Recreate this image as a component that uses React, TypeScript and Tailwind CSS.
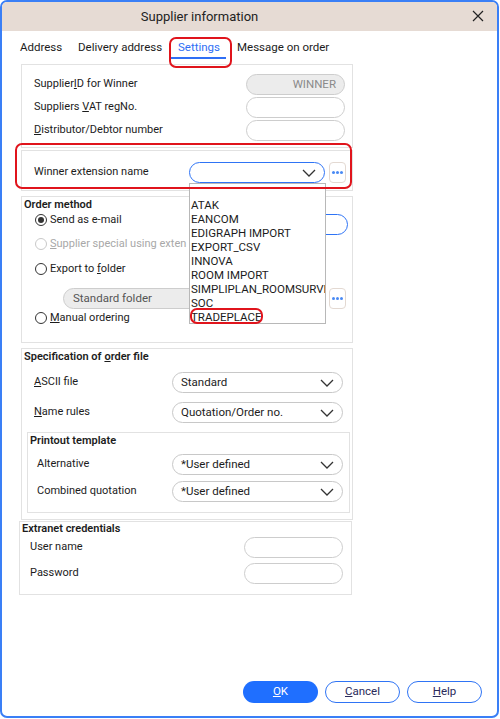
import React from 'react';

const font = { fontFamily: 'Roboto, "Noto Sans", sans-serif' };

function Chevron() {
  return (
    <svg width="14" height="8" viewBox="0 0 14 8" className="shrink-0">
      <path d="M1 1 L7 7 L13 1" fill="none" stroke="#333" strokeWidth="1.3" />
    </svg>
  );
}

function Dots() {
  return (
    <div className="w-[17px] h-[21px] shrink-0 rounded-[4px] border border-[#e3d9d2] flex items-center justify-center gap-[1px]">
      <span className="w-[3px] h-[3px] rounded-full bg-[#4a8af4]" />
      <span className="w-[3px] h-[3px] rounded-full bg-[#4a8af4]" />
      <span className="w-[3px] h-[3px] rounded-full bg-[#4a8af4]" />
    </div>
  );
}

function Select({ value, width, active }: { value?: string; width: string; active?: boolean }) {
  return (
    <div
      className={`${width} h-[21px] rounded-full border flex items-center justify-between pl-[8px] pr-[8px] ${
        active ? 'border-[#2f74f5]' : 'border-[#c8c8c8]'
      }`}
    >
      <span className="text-[11.5px] text-[#1c1c1c]">{value}</span>
      <Chevron />
    </div>
  );
}

function Input({ value, gray }: { value?: string; gray?: boolean }) {
  return (
    <div
      className={`w-[99px] h-[21px] rounded-full border border-[#cdcdcd] flex items-center justify-end pr-[8px] text-[11.5px] text-[#8a8a8a] ${
        gray ? 'bg-[#ececec]' : 'bg-white'
      }`}
    >
      {value}
    </div>
  );
}

function Radio({ checked, disabled }: { checked?: boolean; disabled?: boolean }) {
  return (
    <span
      className={`w-[12px] h-[12px] rounded-full border flex items-center justify-center shrink-0 ${
        disabled ? 'border-[#c8c8c8]' : 'border-[#333]'
      }`}
    >
      {checked && <span className="w-[6px] h-[6px] rounded-full bg-[#333]" />}
    </span>
  );
}

const items = ['', 'ATAK', 'EANCOM', 'EDIGRAPH IMPORT', 'EXPORT_CSV', 'INNOVA', 'ROOM IMPORT', 'SIMPLIPLAN_ROOMSURVEY', 'SOC', 'TRADEPLACE'];

export default function App() {
  return (
    <div className="w-[500px] h-[719px] bg-white relative text-[#1c1c1c] text-[11px]" style={font}>
      <div className="w-[499px] h-[718px] border-2 border-[#3a7ff6] rounded-[7px] flex flex-col overflow-hidden">
        {/* title bar */}
        <div className="h-[29px] bg-[#e6dbd4] flex items-center justify-center pr-[100px] relative shrink-0">
          <span className="text-[13px] text-[#222]">Supplier information</span>
          <svg width="12" height="12" viewBox="0 0 12 12" className="absolute right-[13px] top-[8px]">
            <path d="M1 1 L11 11 M11 1 L1 11" stroke="#222" strokeWidth="1.2" />
          </svg>
        </div>

        {/* tabs */}
        <div className="h-[33px] flex items-center pl-[9px] text-[11.5px] shrink-0 whitespace-nowrap">
          <div className="w-[58px] pl-[9px]">Address</div>
          <div className="w-[100px] pl-[9px]">Delivery address</div>
          <div className="w-[59px] pl-[9px] text-[#2f6ff5] relative h-[33px] flex items-center">
            Settings
            <span className="absolute left-[1px] right-[2px] bottom-[5px] h-[2px] bg-[#2f6ff5]" />
          </div>
          <div className="pl-[9px]">Message on order</div>
        </div>

        <div className="pl-[19px] flex flex-col flex-1">
          {/* frame 1 */}
          <div className="w-[332px] h-[84px] border border-[#e2e2e2] pt-[9px] pl-[12px] pr-[7px] flex flex-col gap-[2px]">
            <div className="flex items-center justify-between h-[21px]">
              <span>
                Supplier<u>I</u>D for Winner
              </span>
              <Input value="WINNER" gray />
            </div>
            <div className="flex items-center justify-between h-[21px]">
              <span>
                Suppliers <u>V</u>AT regNo.
              </span>
              <Input />
            </div>
            <div className="flex items-center justify-between h-[21px]">
              <span>
                <u>D</u>istributor/Debtor number
              </span>
              <Input />
            </div>
          </div>

          {/* frame 2 */}
          <div className="w-[332px] h-[41px] mt-[2px] border border-[#e2e2e2] pt-[11px] pl-[12px] pr-[6px] flex items-start">
            <div className="w-[155px] h-[21px] flex items-center">Winner extension name</div>
            <Select width="w-[136px]" active />
            <div className="ml-[4px]">
              <Dots />
            </div>
          </div>

          {/* frame 3: order method */}
          <div className="w-[332px] h-[147px] mt-[5px] border border-[#e2e2e2] pl-[2px]">
            <div className="h-[16px] flex items-center font-semibold">Order method</div>
            <div className="h-[22px] flex items-start">
              <div className="h-[14px] flex items-center gap-[3px] pl-[11px] w-[166px]">
                <Radio checked />
                <span>Send as e-mail</span>
              </div>
              <div className="mt-[1px] w-[158px] h-[21px] rounded-full border border-[#2f74f5]" />
            </div>
            <div className="h-[14px] mt-[2px] w-[166px] overflow-hidden whitespace-nowrap flex items-center gap-[3px] pl-[11px] text-[#a8a8a8]">
              <Radio disabled />
              <span>
                <u>S</u>upplier special using exten
              </span>
            </div>
            <div className="h-[14px] mt-[11px] flex items-center gap-[3px] pl-[11px]">
              <Radio />
              <span>
                Export to <u>f</u>older
              </span>
            </div>
            <div className="h-[21px] mt-[12px] flex items-center pl-[39px]">
              <div className="w-[262px] h-[21px] rounded-full border border-[#cdcdcd] bg-[#ececec] flex items-center pl-[9px] text-[11.5px] text-[#555]">
                Standard folder
              </div>
              <div className="ml-[4px]">
                <Dots />
              </div>
            </div>
            <div className="h-[14px] mt-[2px] flex items-center gap-[3px] pl-[11px]">
              <Radio />
              <span>
                <u>M</u>anual ordering
              </span>
            </div>
          </div>

          {/* frame 4: spec of order file */}
          <div className="w-[332px] h-[172px] mt-[5px] border border-[#e2e2e2]">
            <div className="h-[16px] flex items-center font-semibold pl-[2px]">
              Specification of <u className="ml-[3px]">o</u>rder file
            </div>
            <div className="mt-[7px] h-[21px] flex items-center pl-[12px]">
              <span className="w-[138px]">
                <u>A</u>SCII file
              </span>
              <Select value="Standard" width="w-[171px]" />
            </div>
            <div className="mt-[9px] h-[21px] flex items-center pl-[12px]">
              <span className="w-[138px]">
                <u>N</u>ame rules
              </span>
              <Select value="Quotation/Order no." width="w-[171px]" />
            </div>
            <div className="mt-[9px] ml-[5px] w-[323px] h-[81px] border border-[#e2e2e2]">
              <div className="h-[16px] flex items-center font-semibold pl-[2px]">Printout template</div>
              <div className="mt-[5px] h-[21px] flex items-center pl-[9px]">
                <span className="w-[135px]">Alternative</span>
                <Select value="*User defined" width="w-[171px]" />
              </div>
              <div className="mt-[6px] h-[21px] flex items-center pl-[9px]">
                <span className="w-[135px]">Combined quotation</span>
                <Select value="*User defined" width="w-[171px]" />
              </div>
            </div>
          </div>

          {/* frame 5: extranet */}
          <div className="w-[333px] h-[74px] mt-[1px] -ml-[2px] border border-[#e2e2e2]">
            <div className="h-[15px] flex items-center font-semibold pl-[2px]">Extranet credentials</div>
            <div className="h-[21px] flex items-center justify-between pl-[10px] pr-[8px]">
              <span>User name</span>
              <Input />
            </div>
            <div className="mt-[5px] h-[21px] flex items-center justify-between pl-[10px] pr-[8px]">
              <span>Password</span>
              <Input />
            </div>
          </div>

          {/* buttons */}
          <div className="mt-auto mb-[13px] flex justify-end gap-[7px] pr-[15px] text-[11.5px]">
            <div className="w-[75px] h-[22px] rounded-full bg-[#1f6fff] text-white flex items-center justify-center">
              <span>
                <u>O</u>K
              </span>
            </div>
            <div className="w-[75px] h-[22px] rounded-full border border-[#2f74f5] text-[#2a2a5a] flex items-center justify-center">
              <span>
                <u>C</u>ancel
              </span>
            </div>
            <div className="w-[75px] h-[22px] rounded-full border border-[#2f74f5] text-[#2a2a5a] flex items-center justify-center">
              <span>
                <u>H</u>elp
              </span>
            </div>
          </div>
        </div>
      </div>

      {/* open dropdown list */}
      <div className="absolute left-[189px] top-[183px] w-[137px] h-[141px] bg-white border border-[#b8b8b8] overflow-hidden text-[11.5px]">
        {items.map((it, i) => (
          <div key={i} className="h-[14px] leading-[14px] pl-[1px] whitespace-nowrap overflow-hidden">
            {it}
          </div>
        ))}
      </div>

      {/* red highlight marks */}
      <div className="absolute left-[169px] top-[37px] w-[63px] h-[31px] border-2 border-[#e0141c] rounded-[7px]" />
      <div className="absolute left-[15px] top-[143px] w-[337px] h-[46px] border-2 border-[#e0141c] rounded-[7px]" />
      <div className="absolute left-[190px] top-[308px] w-[73px] h-[16px] border-2 border-[#e0141c] rounded-[7px]" />
    </div>
  );
}
